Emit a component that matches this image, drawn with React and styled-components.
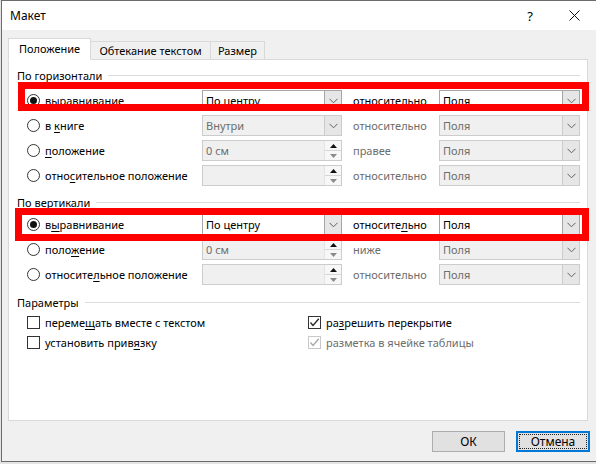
import React from 'react'
import styled, { createGlobalStyle } from 'styled-components'

const GlobalStyle = createGlobalStyle`
  html, body {
    margin: 0;
    padding: 0;
    background: #e4e4e4;
  }
  body {
    font-family: "Noto Sans", "Open Sans", sans-serif;
    font-size: 11px;
    color: #000;
  }
`

const Screen = styled.div`
  position: relative;
  width: 596px;
  height: 464px;
  overflow: hidden;
`

const Window = styled.div`
  position: relative;
  margin-left: 1px;
  width: 596px;
  height: 462px;
  box-sizing: border-box;
  border: 1px solid #6b6b6b;
  border-right: none;
  background: #f0f0f0;
  display: flex;
  flex-direction: column;
`

const TitleBar = styled.div`
  height: 29px;
  background: #fff;
  display: flex;
  align-items: center;
  padding-left: 8px;
`

const Title = styled.div`
  flex: 1;
  font-size: 12px;
`

const TitleButton = styled.div`
  width: ${p => p.$w}px;
  height: 29px;
  display: flex;
  align-items: center;
  justify-content: center;
  font-size: 13px;
`

const Body = styled.div`
  flex: 1;
  padding: 8px 0 0 6px;
  display: flex;
  flex-direction: column;
`

const Tabs = styled.div`
  display: flex;
  align-items: flex-end;
  height: 21px;
  position: relative;
  z-index: 2;
`

const Tab = styled.div`
  box-sizing: border-box;
  width: ${p => p.$w}px;
  height: ${p => (p.$active ? 22 : 18)}px;
  margin-bottom: ${p => (p.$active ? -1 : 0)}px;
  margin-left: ${p => (p.$first ? 0 : -1)}px;
  border: 1px solid #d9d9d9;
  border-bottom: ${p => (p.$active ? '1px solid #fff' : 'none')};
  background: ${p => (p.$active ? '#fff' : '#f0f0f0')};
  display: flex;
  align-items: center;
  justify-content: center;
  padding-bottom: ${p => (p.$active ? 2 : 0)}px;
  position: relative;
  z-index: ${p => (p.$active ? 2 : 1)};
`

const Panel = styled.div`
  position: relative;
  box-sizing: border-box;
  width: 580px;
  height: 362px;
  background: #fff;
  border: 1px solid #d9d9d9;
  padding: 7px 7px 0 8px;
`

const Group = styled.div`
  margin-top: ${p => p.$mt || 0}px;
`

const GroupHeader = styled.div`
  display: flex;
  align-items: center;
  height: 16px;
  margin-bottom: ${p => p.$mb}px;
`

const GroupLine = styled.div`
  flex: 1;
  height: 1px;
  background: #dcdcdc;
  margin-left: 6px;
`

const Rows = styled.div`
  display: flex;
  flex-direction: column;
  gap: 4px;
  padding-left: 10px;
`

const Row = styled.div`
  display: grid;
  grid-template-columns: 175px 140px 97px 141px;
  height: 21px;
  align-items: center;
`

const Choice = styled.label`
  display: flex;
  align-items: center;
  gap: 5px;
  white-space: nowrap;
`

const Radio = styled.span`
  box-sizing: border-box;
  width: 13px;
  height: 13px;
  border-radius: 50%;
  border: 1px solid #333;
  background: #fff;
  display: flex;
  align-items: center;
  justify-content: center;
  &::after {
    content: '';
    display: ${p => (p.$on ? 'block' : 'none')};
    width: 7px;
    height: 7px;
    border-radius: 50%;
    background: #111;
  }
`

const Key = styled.span`
  text-decoration: underline;
  text-underline-offset: 2px;
`

const SideLabel = styled.div`
  padding-left: 11px;
  color: ${p => (p.$disabled ? '#6d6d6d' : '#000')};
  white-space: nowrap;
`

const Combo = styled.div`
  box-sizing: border-box;
  height: 21px;
  display: flex;
  border: 1px solid ${p => (p.$disabled ? '#cccccc' : '#a6a6a6')};
  background: ${p => (p.$disabled ? '#f0f0f0' : '#fff')};
  color: ${p => (p.$disabled ? '#6d6d6d' : '#000')};
`

const ComboText = styled.div`
  flex: 1;
  padding-left: 3px;
  display: flex;
  align-items: center;
  white-space: nowrap;
`

const ComboButton = styled.div`
  width: 16px;
  border-left: 1px solid ${p => (p.$disabled ? '#cccccc' : '#a6a6a6')};
  background: #e6e6e6;
  display: flex;
  align-items: center;
  justify-content: center;
`

const SpinButtons = styled.div`
  width: 16px;
  display: flex;
  flex-direction: column;
  background: #f7f7f7;
  border-left: 1px solid #e3e3e3;
`

const SpinHalf = styled.div`
  flex: 1;
  display: flex;
  align-items: center;
  justify-content: center;
  border-top: ${p => (p.$bottom ? '1px solid #d6d6d6' : 'none')};
`

const Checks = styled.div`
  display: grid;
  grid-template-columns: 281px 1fr;
  grid-auto-rows: 20px;
  padding-left: 10px;
  align-items: center;
`

const CheckItem = styled.label`
  display: flex;
  align-items: center;
  gap: 5px;
  white-space: nowrap;
  color: ${p => (p.$disabled ? '#6d6d6d' : '#000')};
`

const Box = styled.span`
  box-sizing: border-box;
  width: 13px;
  height: 13px;
  border: 1px solid ${p => (p.$disabled ? '#c8c8c8' : '#333')};
  background: #fff;
  display: flex;
  align-items: center;
  justify-content: center;
`

const Highlight = styled.div`
  position: absolute;
  box-sizing: border-box;
  border: 7px solid #ff0000;
  pointer-events: none;
  z-index: 5;
`

const Footer = styled.div`
  display: flex;
  justify-content: flex-end;
  gap: 11px;
  padding: 10px 7px 0 0;
`

const Button = styled.div`
  box-sizing: border-box;
  width: ${p => p.$w}px;
  height: 21px;
  background: #e1e1e1;
  border: ${p => (p.$default ? '2px solid #0078d7' : '1px solid #adadad')};
  display: flex;
  align-items: center;
  justify-content: center;
  position: relative;
  font-size: 12px;
  &::after {
    content: '';
    display: ${p => (p.$default ? 'block' : 'none')};
    position: absolute;
    inset: 1px;
    border: 1px dotted #222;
  }
`

const Chevron = () => (
  <svg width="9" height="6" viewBox="0 0 9 6">
    <polyline points="0.5,0.8 4.5,4.8 8.5,0.8" fill="none" stroke="#606060" strokeWidth="1" />
  </svg>
)

const Tick = ({ color }) => (
  <svg width="11" height="11" viewBox="0 0 11 11">
    <polyline points="1.5,5.5 4,8.5 9.8,1.8" fill="none" stroke={color} strokeWidth="1.3" />
  </svg>
)

const Select = ({ value, disabled }) => (
  <Combo $disabled={disabled}>
    <ComboText>{value}</ComboText>
    <ComboButton $disabled={disabled}>
      <Chevron />
    </ComboButton>
  </Combo>
)

const Spinner = ({ value }) => (
  <Combo $disabled>
    <ComboText>{value}</ComboText>
    <SpinButtons>
      <SpinHalf>
        <svg width="7" height="4" viewBox="0 0 7 4"><polygon points="0,4 3.5,0 7,4" fill="#111" /></svg>
      </SpinHalf>
      <SpinHalf $bottom>
        <svg width="7" height="4" viewBox="0 0 7 4"><polygon points="0,0 3.5,4 7,0" fill="#8a8a8a" /></svg>
      </SpinHalf>
    </SpinButtons>
  </Combo>
)

const CloseIcon = () => (
  <svg width="11" height="11" viewBox="0 0 11 11">
    <path d="M0.5 0.5 L10.5 10.5 M10.5 0.5 L0.5 10.5" stroke="#111" strokeWidth="1" />
  </svg>
)

const App = () => {
  return (
    <Screen>
      <GlobalStyle />
      <Window>
        <TitleBar>
          <Title>Макет</Title>
          <TitleButton $w={42}>?</TitleButton>
          <TitleButton $w={46}><CloseIcon /></TitleButton>
        </TitleBar>
        <Body>
          <Tabs>
            <Tab $active $first $w={83}>Положение</Tab>
            <Tab $w={121}>Обтекание текстом</Tab>
            <Tab $w={55}>Размер</Tab>
          </Tabs>
          <Panel>
            <Group>
              <GroupHeader $mb={7}>
                По горизонтали
                <GroupLine />
              </GroupHeader>
              <Rows>
                <Row>
                  <Choice><Radio $on /><span><Key>в</Key>ыравнивание</span></Choice>
                  <Select value="По центру" />
                  <SideLabel><Key>о</Key>тносительно</SideLabel>
                  <Select value="Поля" />
                </Row>
                <Row>
                  <Choice><Radio /><span>в <Key>к</Key>ниге</span></Choice>
                  <Select value="Внутри" disabled />
                  <SideLabel $disabled>относительно</SideLabel>
                  <Select value="Поля" disabled />
                </Row>
                <Row>
                  <Choice><Radio /><span><Key>п</Key>оложение</span></Choice>
                  <Spinner value="0 см" />
                  <SideLabel $disabled>правее</SideLabel>
                  <Select value="Поля" disabled />
                </Row>
                <Row>
                  <Choice><Radio /><span>отно<Key>с</Key>ительное положение</span></Choice>
                  <Spinner value="" />
                  <SideLabel $disabled>относительно</SideLabel>
                  <Select value="Поля" disabled />
                </Row>
              </Rows>
            </Group>

            <Group $mt={8}>
              <GroupHeader $mb={4}>
                По вертикали
                <GroupLine />
              </GroupHeader>
              <Rows>
                <Row>
                  <Choice><Radio $on /><span>в<Key>ы</Key>равнивание</span></Choice>
                  <Select value="По центру" />
                  <SideLabel>относите<Key>л</Key>ьно</SideLabel>
                  <Select value="Поля" />
                </Row>
                <Row>
                  <Choice><Radio /><span>поло<Key>ж</Key>ение</span></Choice>
                  <Spinner value="0 см" />
                  <SideLabel $disabled>ниже</SideLabel>
                  <Select value="Поля" disabled />
                </Row>
                <Row>
                  <Choice><Radio /><span>относите<Key>л</Key>ьное положение</span></Choice>
                  <Spinner value="" />
                  <SideLabel $disabled>относительно</SideLabel>
                  <Select value="Поля" disabled />
                </Row>
              </Rows>
            </Group>

            <Group $mt={9}>
              <GroupHeader $mb={2}>
                Параметры
                <GroupLine />
              </GroupHeader>
              <Checks>
                <CheckItem><Box /><span>переме<Key>щ</Key>ать вместе с текстом</span></CheckItem>
                <CheckItem><Box><Tick color="#222" /></Box><span>ра<Key>з</Key>решить перекрытие</span></CheckItem>
                <CheckItem><Box /><span>установить прив<Key>я</Key>зку</span></CheckItem>
                <CheckItem $disabled><Box $disabled><Tick color="#a8a8a8" /></Box><span>разметка в ячейке таблицы</span></CheckItem>
              </Checks>
            </Group>

            <Highlight style={{ left: 9, top: 22, width: 571, height: 29 }} />
            <Highlight style={{ left: 6, top: 148, width: 574, height: 33 }} />
          </Panel>
          <Footer>
            <Button $w={73}>ОК</Button>
            <Button $w={74} $default>Отмена</Button>
          </Footer>
        </Body>
      </Window>
    </Screen>
  )
}

export default App
